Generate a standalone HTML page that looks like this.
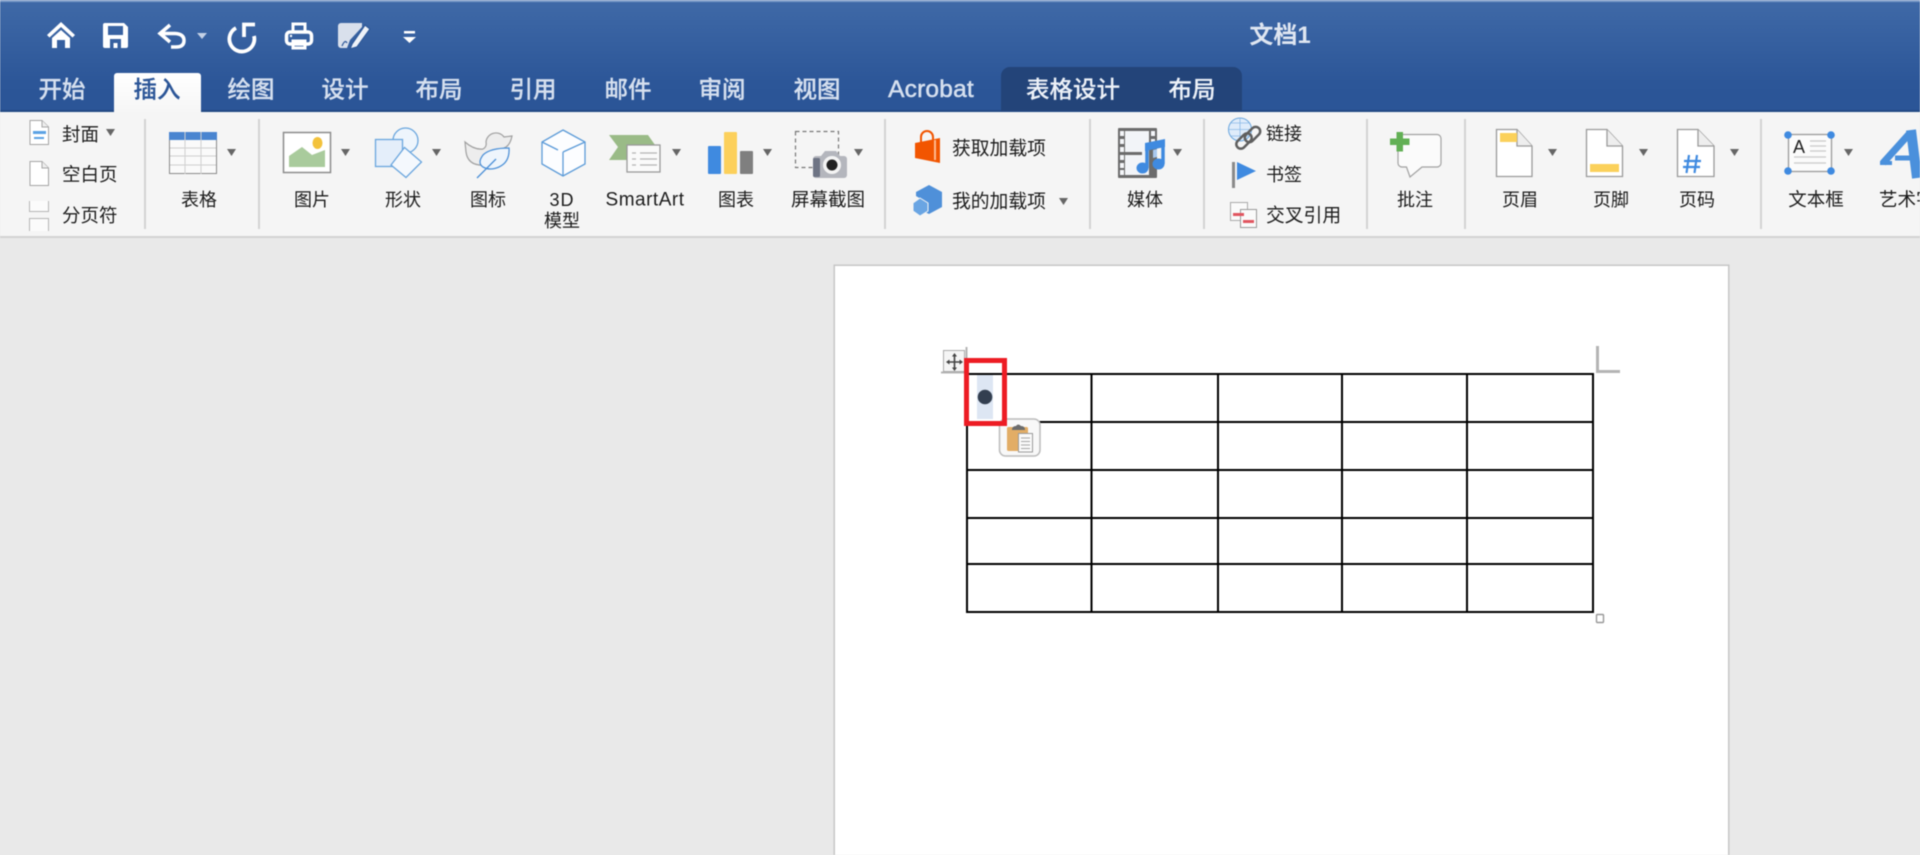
<!DOCTYPE html>
<html lang="zh"><head><meta charset="utf-8"><title>文档1</title>
<style>
html,body{margin:0;padding:0;background:#e9e9e9}
body{position:relative;width:1920px;height:855px;overflow:hidden;font-family:"Liberation Sans","Noto Sans CJK SC",sans-serif;color:#1c1c1c}
#wrap{position:absolute;left:0;top:0;width:1920px;height:855px;overflow:hidden;filter:blur(.45px)}
.abs{position:absolute}
#bar{left:0;top:0;width:1920px;height:112px;background:linear-gradient(#3f69a7,#2c5698 75%,#2b5597);border-top:2px solid #7d9cc9;border-bottom:2px solid #234a85;box-sizing:border-box}
#ribbon{left:0;top:112px;width:1920px;height:126px;background:#f5f5f5;border-bottom:2px solid #d2d2d2;box-sizing:border-box}
#group{left:1001px;top:67px;width:241px;height:44px;background:#234479;border-radius:9px 9px 0 0}
#active{left:114px;top:73px;width:87px;height:39px;background:linear-gradient(#fff,#f6f6f6);border-radius:3px 3px 0 0}
#page{left:835px;top:266px;width:893px;height:600px;background:#fff;box-shadow:0 0 0 1.500px #c6c6c6}
.t{position:absolute;white-space:nowrap;transform:translate(-50%,-50%);font-size:18px;line-height:1}
.l{position:absolute;white-space:nowrap;transform:translateY(-50%);font-size:18px;line-height:1}
.tab{font-size:23.5px;color:#d6e0ef;font-weight:500;-webkit-text-stroke:.2px #d6e0ef}
#svg{position:absolute;left:0;top:0}
.cp{fill:#666}
</style></head><body><div id="wrap">
<div class="abs" id="bar"></div>
<div class="abs" id="group"></div>
<div class="abs" id="active"></div>
<div class="abs" id="ribbon"></div>
<div class="abs" id="page"></div>

<div class="t" style="left:1280px;top:36px;font-size:24px;font-weight:700;color:#dfe6f1">文档1</div>
<div class="t tab" style="left:62px;top:90px">开始</div>
<div class="t tab" style="left:157px;top:90px;color:#2b5597;-webkit-text-stroke:.2px #2b5597">插入</div>
<div class="t tab" style="left:251px;top:90px">绘图</div>
<div class="t tab" style="left:345px;top:90px">设计</div>
<div class="t tab" style="left:439px;top:90px">布局</div>
<div class="t tab" style="left:533px;top:90px">引用</div>
<div class="t tab" style="left:628px;top:90px">邮件</div>
<div class="t tab" style="left:722px;top:90px">审阅</div>
<div class="t tab" style="left:817px;top:90px">视图</div>
<div class="t tab" style="left:931px;top:90px;font-size:24.5px;letter-spacing:.2px;-webkit-text-stroke:.5px #d6e0ef">Acrobat</div>
<div class="t tab" style="left:1073px;top:90px;color:#eef2f8">表格设计</div>
<div class="t tab" style="left:1192px;top:90px;color:#eef2f8">布局</div>

<div class="l" style="left:62px;top:135px;font-size:18.5px">封面</div>
<div class="l" style="left:62px;top:175px;font-size:18.5px">空白页</div>
<div class="l" style="left:62px;top:216px;font-size:18.5px">分页符</div>
<div class="t" style="left:199px;top:200px">表格</div>
<div class="t" style="left:312px;top:200px">图片</div>
<div class="t" style="left:403px;top:200px">形状</div>
<div class="t" style="left:488px;top:200px">图标</div>
<div class="t" style="left:562px;top:200px;letter-spacing:1px">3D</div>
<div class="t" style="left:562px;top:221px">模型</div>
<div class="t" style="left:645px;top:200px;font-size:19px;letter-spacing:.5px">SmartArt</div>
<div class="t" style="left:736px;top:200px">图表</div>
<div class="t" style="left:828px;top:200px;font-size:18.5px">屏幕截图</div>
<div class="l" style="left:952px;top:148.500px;font-size:18.8px">获取加载项</div>
<div class="l" style="left:952px;top:201.500px;font-size:18.8px">我的加载项</div>
<div class="t" style="left:1145px;top:200px">媒体</div>
<div class="l" style="left:1266px;top:134px">链接</div>
<div class="l" style="left:1266px;top:175px">书签</div>
<div class="l" style="left:1266px;top:216px;font-size:18.8px">交叉引用</div>
<div class="t" style="left:1415px;top:200px">批注</div>
<div class="t" style="left:1520px;top:200px">页眉</div>
<div class="t" style="left:1611px;top:200px">页脚</div>
<div class="t" style="left:1697px;top:200px">页码</div>
<div class="t" style="left:1816px;top:200px;font-size:18.5px">文本框</div>
<div class="l" style="left:1879px;top:200px;font-size:18.5px">艺术字</div>

<svg id="svg" width="1920" height="855" viewBox="0 0 1920 855" xmlns="http://www.w3.org/2000/svg">
<!-- QAT -->
<g fill="#fff" stroke="none">
<path d="M47 35 61 22 75 35 72.500 37.500 61 27 49.500 37.500Z"/>
<path d="M52 38 61 30 70 38V48H65V40H57V48H52Z"/>
<path fill-rule="evenodd" d="M105 23H124L128 27V46A2 2 0 0 1 126 48H105A2 2 0 0 1 103 46V25A2 2 0 0 1 105 23ZM108 26V35H123V26ZM110 48H121V39H110ZM113.500 48V43H117.500V48Z"/>
</g>
<g fill="none" stroke="#fff" stroke-width="3.500">
<path d="M170 25 160 33.500 170 42M160 33.500H175Q184 34 184 40.500 184 47 176 47H171"/>
<path d="M255 24.500H244V37" stroke-width="3.800"/>
<path d="M236 28A12.500 12.500 0 1 0 254 36" stroke-width="3.800"/>
<rect x="286.500" y="32" width="25" height="12" rx="3.500"/>
<path d="M293 31V24H305V31M293 41H305V48H293Z" stroke-width="3"/>
</g>
<circle cx="291" cy="36" r="1.200" fill="#fff"/>
<path d="M197 33H207L202 39Z" fill="#c4d1e6"/>
<path d="M341 23H362V27L350 40 347 48H341A3 3 0 0 1 338 45V26A3 3 0 0 1 341 23Z" fill="#d9e0ec"/>
<path d="M342 46Q345 39 347 43" fill="none" stroke="#2f5999" stroke-width="1.300"/>
<path d="M352 44 365 25 370 29 357 47 350 49Z" fill="#eef2f8" stroke="#2f5999" stroke-width="1.300"/>
<path d="M404 31H415V33.500H404ZM403 37H416L409.500 43Z" fill="#fff"/>

<!-- separators -->
<g fill="#d2d2d2">
<rect x="144" y="119" width="2" height="110"/><rect x="258" y="119" width="2" height="110"/>
<rect x="884" y="119" width="2" height="110"/><rect x="1089" y="119" width="2" height="110"/>
<rect x="1203" y="119" width="2" height="110"/><rect x="1366" y="119" width="2" height="110"/>
<rect x="1464" y="119" width="2" height="110"/><rect x="1760" y="119" width="2" height="110"/>
</g>

<!-- carets -->
<g class="cp">
<path d="M106 129H115L110.500 136Z"/>
<path d="M227 149H236L231.500 156Z"/><path d="M341 149H350L345.500 156Z"/>
<path d="M432 149H441L436.500 156Z"/><path d="M672 149H681L676.500 156Z"/>
<path d="M763 149H772L767.500 156Z"/><path d="M854 149H863L858.500 156Z"/>
<path d="M1059 198H1068L1063.500 205Z"/><path d="M1173 149H1182L1177.500 156Z"/>
<path d="M1548 149H1557L1552.500 156Z"/><path d="M1639 149H1648L1643.500 156Z"/>
<path d="M1730 149H1739L1734.500 156Z"/><path d="M1844 149H1853L1848.500 156Z"/>
</g>

<!-- cover / blank / break -->
<path d="M30 120.500H42L48.500 127V144.500H30Z" fill="#fff" stroke="#a5a5a5" stroke-width="1"/>
<path d="M42 120.500V127H48.500" fill="#eee" stroke="#a5a5a5"/>
<rect x="33" y="131" width="13" height="3" fill="#5ba2e4"/><rect x="34" y="137" width="10" height="2" fill="#5ba2e4"/>
<path d="M30 161.500H42L48.500 168V185.500H30Z" fill="#fff" stroke="#a5a5a5"/>
<path d="M42 161.500V168H48.500" fill="#eee" stroke="#a5a5a5"/>
<path d="M29.500 201V211.500H48.500V201M29.500 231V218.500H48.500V231" fill="#fbfbfb" stroke="#b5b5b5"/>

<!-- table -->
<rect x="169.500" y="132.500" width="47" height="41" fill="#fafafa" stroke="#8a8a8a"/>
<rect x="169" y="132" width="48" height="8" fill="#4a85d0"/>
<path d="M185 132V174M201 132V174M170 148H216M170 156H216M170 165H216" stroke="#cfcfcf" fill="none"/>

<!-- picture -->
<rect x="283.500" y="132.500" width="47" height="40" fill="#fff" stroke="#8c8c8c" stroke-width="1.500"/>
<path d="M289 167V156L302 147 312 155 325 150V167Z" fill="#a9cb9c"/>
<ellipse cx="317.500" cy="143" rx="5" ry="6" fill="#f3c23b"/>

<!-- shapes -->
<circle cx="405.500" cy="140.500" r="12.500" fill="#eef5fc" stroke="#6aa6de" stroke-width="1.300"/>
<rect x="375.500" y="139.500" width="27" height="27" fill="#e4eefa" stroke="#6aa6de" stroke-width="1.300"/>
<path d="M404.500 147.500 421.500 162 406 177.500 391 165Z" fill="#f4f8fd" stroke="#6aa6de" stroke-width="1.300"/>

<!-- icons -->
<path d="M465 142Q474 150 483 149 487 147 486 142A10 10 0 0 1 504 137L512 136Q510 146 504 148 504 163 487 165 468 167 466 152Z" fill="#ededed" stroke="#a0a0a0" stroke-width="1.200"/>
<path d="M509 148Q490 148 483 155 477 163 483 167 490 171 499 167 510 162 509 148Z" fill="#eef5fc" stroke="#4f92d8" stroke-width="1.300"/>
<path d="M477 178 496 159" stroke="#4f92d8" stroke-width="1.300" fill="none"/>

<!-- 3D -->
<path d="M563 130 585 142V164L563 176 542 164V142Z" fill="#fcfdff" stroke="#5c9bd8" stroke-width="1.300"/>
<path d="M542 142 558 150M563 152 585 142M563 152V176" stroke="#5c9bd8" stroke-width="1.300" fill="none"/>

<!-- SmartArt -->
<path d="M609 135H648L660 152V172H629V160H620L609 160 618 147Z" fill="#9abb87"/>
<rect x="627" y="145" width="33" height="27" fill="#fafafa" stroke="#9a9a9a" stroke-width="1.300"/>
<path d="M632 153H636M632 159H636M632 165H636M640 153H657M640 159H657M640 165H657" stroke="#b5b5b5" stroke-width="1.300" fill="none"/>

<!-- chart -->
<rect x="708" y="146" width="13" height="28" rx="1" fill="#3f8ae0"/>
<rect x="724" y="132" width="13" height="42" rx="1" fill="#fcd05b"/>
<rect x="740" y="151" width="13" height="23" rx="1" fill="#7f7f7f"/>

<!-- screenshot -->
<rect x="795.500" y="131.500" width="43" height="36" fill="none" stroke="#777" stroke-dasharray="4 3" stroke-width="1.200"/>
<rect x="813" y="156" width="34" height="22" rx="3" fill="#b4b6bd"/>
<path d="M821 156 825 151H836L840 156Z" fill="#b4b6bd"/>
<rect x="813" y="158" width="7" height="19" rx="1.500" fill="#6e7484"/>
<circle cx="832" cy="165" r="9" fill="#f4f4f4"/><circle cx="832" cy="165" r="5.500" fill="#222"/>

<!-- store / addins -->
<path d="M915 143 940 138V163L915 158Z" fill="#f25500"/>
<rect x="934" y="140" width="2" height="20" fill="#ffb98f"/>
<path d="M921 143V137A6 6 0 0 1 933 137V141" fill="none" stroke="#f25500" stroke-width="2"/>
<path d="M929 185 942 192V207L929 214 921 210V199L916 196V192Z" fill="#4f90d9"/>
<path d="M920 198 928 203V211L920 216 913 211V203Z" fill="#6aa5e3" stroke="#f5f5f5" stroke-width="1"/>

<!-- media -->
<rect x="1118" y="128" width="39" height="50" fill="#6c6c6c" rx="1"/>
<rect x="1125" y="131" width="24" height="44" fill="#f2f4f8"/>
<rect x="1125" y="152" width="17" height="3" fill="#6c6c6c"/>
<g fill="#f4f6f9"><rect x="1120" y="131" width="4" height="5"/><rect x="1120" y="139" width="4" height="5"/><rect x="1120" y="147" width="4" height="5"/><rect x="1120" y="155" width="4" height="5"/><rect x="1120" y="163" width="4" height="5"/><rect x="1120" y="170" width="4" height="5"/><rect x="1151" y="131" width="4" height="5"/><rect x="1151" y="139" width="4" height="5"/></g>
<path d="M1145 143 1165 139V147L1145 151Z" fill="#3f8ae0"/>
<path d="M1147 146V168M1163 142V164" stroke="#3f8ae0" stroke-width="3.500" fill="none"/>
<ellipse cx="1142.500" cy="168" rx="6" ry="5.500" fill="#3f8ae0"/><ellipse cx="1158.500" cy="164" rx="6" ry="5.500" fill="#3f8ae0"/>
<path d="M1153 150 1157 149V157L1153 158Z" fill="#a8c8ee"/>

<!-- link -->
<circle cx="1240" cy="129.500" r="11.500" fill="#dfecfa" stroke="#6aa6de"/>
<path d="M1229 129.500H1251M1240 118V141M1231 123H1249M1231 136H1249" stroke="#8ab9e8" fill="none" stroke-width=".8"/>
<g fill="none" stroke="#5f5f5f" stroke-width="2.500">
<rect x="-9" y="-4.500" width="18" height="9" rx="4.500" transform="translate(1252.500 134.500) rotate(-45)"/>
<rect x="-9" y="-4.500" width="18" height="9" rx="4.500" transform="translate(1244 141) rotate(-45)"/>
</g>

<!-- flag -->
<rect x="1232" y="162" width="3" height="26" fill="#8a8a8a"/>
<path d="M1237 162 1256 171 1237 180Z" fill="#3f8ae0"/>

<!-- xref -->
<rect x="1230.500" y="202.500" width="17" height="18" fill="#fafafa" stroke="#aaa"/>
<rect x="1240.500" y="209.500" width="16" height="18" fill="#fafafa" stroke="#999"/>
<rect x="1233" y="213" width="11" height="3" fill="#e05660"/><rect x="1243" y="220" width="11" height="3" fill="#e05660"/>

<!-- comment -->
<path d="M1402 134.500H1437A4 4 0 0 1 1441 138.500V163A4 4 0 0 1 1437 167H1422L1410 177 1406.500 167H1402A4 4 0 0 1 1398 163V138.500A4 4 0 0 1 1402 134.500Z" fill="#fbfbfb" stroke="#a2a2a2" stroke-width="1.200"/>
<path d="M1396.500 132H1403V138.500H1409.500V145H1403V151.500H1396.500V145H1390V138.500H1396.500Z" fill="#62b055"/>

<!-- header/footer/pagenum docs -->
<g stroke="#9a9a9a" stroke-width="1.300" fill="#fff">
<path d="M1496.500 129.500H1517L1532 146V176.500H1496.500Z"/><path d="M1517 129.500V146H1532" fill="#eee"/>
<path d="M1586.500 129.500H1607L1622.500 146V176.500H1586.500Z"/><path d="M1607 129.500V146H1622.500" fill="#eee"/>
<path d="M1677.500 129.500H1698L1714 146V176.500H1677.500Z"/><path d="M1698 129.500V146H1714" fill="#eee"/>
</g>
<rect x="1500" y="133" width="17" height="9" fill="#fbd15b"/>
<rect x="1590" y="164" width="29" height="8" fill="#fbd15b"/>
<path d="M1689 155 1686.500 173M1697 155 1694.500 173M1684 161H1701M1683 167H1700" stroke="#3f8ae0" stroke-width="2.200" fill="none"/>

<!-- textbox -->
<rect x="1788.500" y="134.500" width="43" height="37" fill="#fbfbfb" stroke="#9a9a9a" stroke-width="1.300"/>
<path d="M1810 141H1826M1810 146H1826M1810 151H1826M1794 157H1826M1794 163H1826" stroke="#c8c8c8" stroke-width="1.300" fill="none"/>
<circle cx="1788" cy="135" r="3.800" fill="#3f8ae0"/><circle cx="1831" cy="135" r="3.800" fill="#3f8ae0"/><circle cx="1788" cy="171" r="3.800" fill="#3f8ae0"/><circle cx="1831" cy="171" r="3.800" fill="#3f8ae0"/>
<text x="1793" y="153" font-family="Liberation Sans" font-size="18" font-weight="400" fill="#222">A</text>

<!-- wordart -->
<g stroke="#4a90dc" fill="none">
<path d="M1883 163 1910 133" stroke-width="7"/>
<path d="M1911 130 1917 178" stroke-width="10"/>
<path d="M1895 158H1916" stroke-width="5"/>
<path d="M1880 163H1892" stroke-width="4"/>
</g>

<!-- table -->
<g stroke="#000" stroke-width="2" fill="none">
<path d="M967 374H1593M967 422H1593M967 470H1593M967 518H1593M967 564H1593M967 612H1593"/>
<path d="M967 373V613M1091.500 373V613M1218 373V613M1342 373V613M1467 373V613M1593 373V613"/>
</g>
<!-- crop marks -->
<path d="M966.500 347V373M941 372.500H965" stroke="#b4b4b4" stroke-width="2" fill="none"/>
<path d="M1597.500 346V371.500H1620" stroke="#b4b4b4" stroke-width="3" fill="none"/>
<rect x="1596.500" y="614.500" width="7" height="8" rx="1" fill="#fff" stroke="#999" stroke-width="1.400"/>
<!-- move handle -->
<rect x="943.500" y="350.500" width="21" height="21" fill="#f5f5f5" stroke="#aaa"/>
<path d="M954.500 355V369M947.500 362H961.500" stroke="#444" stroke-width="1.600" fill="none"/>
<path d="M954.500 353 957 356.500H952ZM954.500 371 957 367.500H952ZM946 362 949.500 359.500V364.500ZM963 362 959.500 359.500V364.500Z" fill="#444"/>
<!-- highlight & dot -->
<rect x="977" y="375" width="16" height="44" fill="#dde6f3"/>
<circle cx="985" cy="397" r="7.300" fill="#333f50"/>
<!-- paste button -->
<rect x="999.500" y="419" width="40.500" height="37" rx="6" fill="#f8f8f8" stroke="#bcbcbc" stroke-width="1.500"/>
<rect x="1007" y="427" width="21" height="24" rx="1.500" fill="#e2ad66"/>
<path d="M1012 430Q1012 426 1016 426 1018 423 1021 426 1025 426 1025 430Z" fill="#6c6c6c"/>
<rect x="1018.500" y="433.500" width="14" height="18.500" fill="#fafafa" stroke="#9a9a9a"/>
<path d="M1021 438H1030M1021 441.500H1030M1021 445H1030M1021 448.500H1030" stroke="#a6a6a6" fill="none"/>
<!-- red rect -->
<rect x="966.500" y="360.500" width="38" height="63" fill="none" stroke="#ed1c24" stroke-width="5"/>
</svg>
</div></body></html>
